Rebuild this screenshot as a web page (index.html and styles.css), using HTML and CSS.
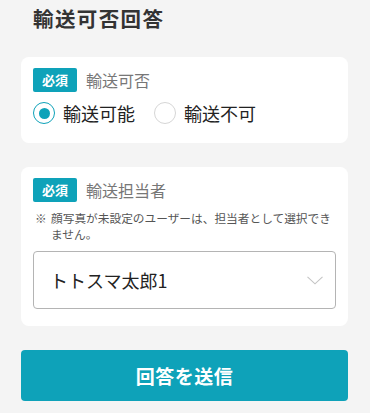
FILE: index.html
```html
<!DOCTYPE html>
<html lang="ja">
<head>
<meta charset="utf-8">
<link rel="stylesheet" href="styles.css">
</head>
<body>
<div class="page">
  <h1 class="title">輸送可否回答</h1>

  <section class="card card-first">
    <div class="field-head">
      <span class="badge">必須</span>
      <span class="field-label">輸送可否</span>
    </div>
    <div class="radios">
      <label class="radio">
        <span class="radio-circle checked"></span>
        <span class="radio-text">輸送可能</span>
      </label>
      <label class="radio">
        <span class="radio-circle"></span>
        <span class="radio-text">輸送不可</span>
      </label>
    </div>
  </section>

  <section class="card card-second">
    <div class="field-head">
      <span class="badge">必須</span>
      <span class="field-label">輸送担当者</span>
    </div>
    <p class="note"><span class="note-mark">※</span><span class="note-text">顔写真が未設定のユーザーは、担当者として選択できません。</span></p>
    <div class="select">
      <span class="select-value">トトスマ太郎1</span>
      <svg class="chevron" width="16" height="9" viewBox="0 0 16 9"><path d="M0.5 0.8 L8 7.8 L15.5 0.8" fill="none" stroke="#c4c4c4" stroke-width="1.1"/></svg>
    </div>
  </section>

  <button class="submit">回答を送信</button>
</div>
</body>
</html>
```

FILE: styles.css
```css
html, body {
  margin: 0;
  padding: 0;
  background: #f4f4f4;
}
body {
  font-family: "Noto Sans CJK JP", "Noto Sans", sans-serif;
  color: #333;
}
.page {
  padding: 0 22px 0 21px;
  display: flex;
  flex-direction: column;
}
.title {
  margin: 0;
  padding: 5px 0 0 12px;
  height: 57px;
  box-sizing: border-box;
  font-size: 20.5px;
  line-height: 26px;
  font-weight: 700;
  letter-spacing: 1.4px;
  color: #333;
}
.card {
  background: #fff;
  border-radius: 8px;
  padding: 11px 12px 0 12px;
  box-sizing: border-box;
}
.card-first {
  height: 86px;
}
.card-second {
  margin-top: 24px;
  height: 159px;
}
.field-head {
  display: flex;
  align-items: center;
  height: 24px;
}
.badge {
  width: 44px;
  height: 24px;
  background: #0ea2b9;
  color: #fff;
  font-size: 13px;
  font-weight: 700;
  line-height: 24px;
  text-align: center;
  border-radius: 2px;
}
.field-label {
  margin-left: 9px;
  font-size: 16px;
  color: #777;
  line-height: 24px;
}
.radios {
  display: flex;
  align-items: center;
  margin-top: 9px;
  height: 24px;
}
.radio {
  display: flex;
  align-items: center;
  margin-right: 19px;
}
.radio-circle {
  width: 22px;
  height: 22px;
  box-sizing: border-box;
  border-radius: 50%;
  border: 1.5px solid #d6d6d6;
  display: flex;
  align-items: center;
  justify-content: center;
}
.radio-circle.checked {
  border-color: #0ea2b9;
}
.radio-circle.checked::after {
  content: "";
  width: 11px;
  height: 11px;
  border-radius: 50%;
  background: #0ea2b9;
}
.radio-text {
  margin-left: 8px;
  font-size: 18px;
  line-height: 24px;
  color: #222;
}
.note {
  margin: 8px 0 0 0;
  display: flex;
  font-size: 11.7px;
  line-height: 16px;
  color: #555;
}
.note-mark {
  width: 16px;
  flex: none;
  padding-left: 2px;
}
.select {
  margin-top: 9px;
  height: 58px;
  box-sizing: border-box;
  border: 1px solid #b4b4b4;
  border-radius: 4px;
  display: flex;
  align-items: center;
  justify-content: space-between;
  padding: 0 12px 0 16px;
}
.select-value {
  font-size: 18px;
  color: #222;
  line-height: 24px;
}
.chevron {
  display: block;
}
.submit {
  margin-top: 24px;
  height: 51px;
  border: none;
  border-radius: 4px;
  background: #0ea2b9;
  color: #fff;
  font-family: "Noto Sans CJK JP", "Noto Sans", sans-serif;
  font-size: 19px;
  font-weight: 700;
  letter-spacing: 0.5px;
  padding: 0;
}
```
